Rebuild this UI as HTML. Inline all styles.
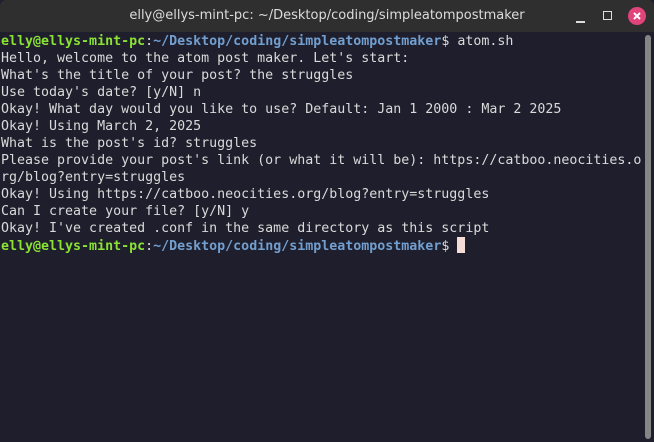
<!DOCTYPE html>
<html><head><style>
html,body{margin:0;padding:0;background:#1e1e2c;}
body{width:654px;height:442px;overflow:hidden;position:relative;font-family:"DejaVu Sans Mono","Liberation Mono",monospace;}
.tb{position:absolute;left:0;top:0;width:654px;height:32px;background:#2f2f2f;border-radius:6px 6px 0 0;}
.title{position:absolute;left:0;right:0;top:8px;text-align:center;color:#dcdcdc;font-family:"DejaVu Sans","Liberation Sans",sans-serif;font-size:13px;}
.term{position:absolute;left:0;top:33px;width:654px;height:409px;background:#1e1e2c;}
pre{margin:0;position:absolute;left:1px;top:0px;font-family:"DejaVu Sans Mono",monospace;font-size:13.3px;line-height:17px;color:#dadada;}
.g{color:#8ae234;font-weight:bold}.b{color:#729fcf;font-weight:bold}
.cur{display:inline-block;width:8px;height:16px;background:#f6dcd6;vertical-align:-3px}
.sb{position:absolute;left:645px;top:35px;width:6px;height:404px;background:#858585;border-radius:3px}
.close{position:absolute;left:628px;top:7px;width:18px;height:18px;border-radius:50%;background:#e0447a;}
</style></head><body>
<div class="tb"><div class="title">elly@ellys-mint-pc: ~/Desktop/coding/simpleatompostmaker</div>
<div style="position:absolute;left:576px;top:21px;width:9px;height:1.5px;background:#ddd"></div>
<div style="position:absolute;left:603px;top:11px;width:7px;height:7px;border:1.5px solid #ddd"></div>
<div class="close"><svg width="18" height="18"><path d="M6 6L12 12M12 6L6 12" stroke="#fff" stroke-width="2"/></svg></div>
</div>
<div class="term"><pre><span class="g">elly@ellys-mint-pc</span>:<span class="b">~/Desktop/coding/simpleatompostmaker</span>$ atom.sh
Hello, welcome to the atom post maker. Let's start:
What's the title of your post? the struggles
Use today's date? [y/N] n
Okay! What day would you like to use? Default: Jan 1 2000 : Mar 2 2025
Okay! Using March 2, 2025
What is the post's id? struggles
Please provide your post's link (or what it will be): https://catboo.neocities.o
rg/blog?entry=struggles
Okay! Using https://catboo.neocities.org/blog?entry=struggles
Can I create your file? [y/N] y
Okay! I've created .conf in the same directory as this script
<span class="g">elly@ellys-mint-pc</span>:<span class="b">~/Desktop/coding/simpleatompostmaker</span>$ <span class="cur"></span></pre></div>
<div class="sb"></div>
</body></html>
